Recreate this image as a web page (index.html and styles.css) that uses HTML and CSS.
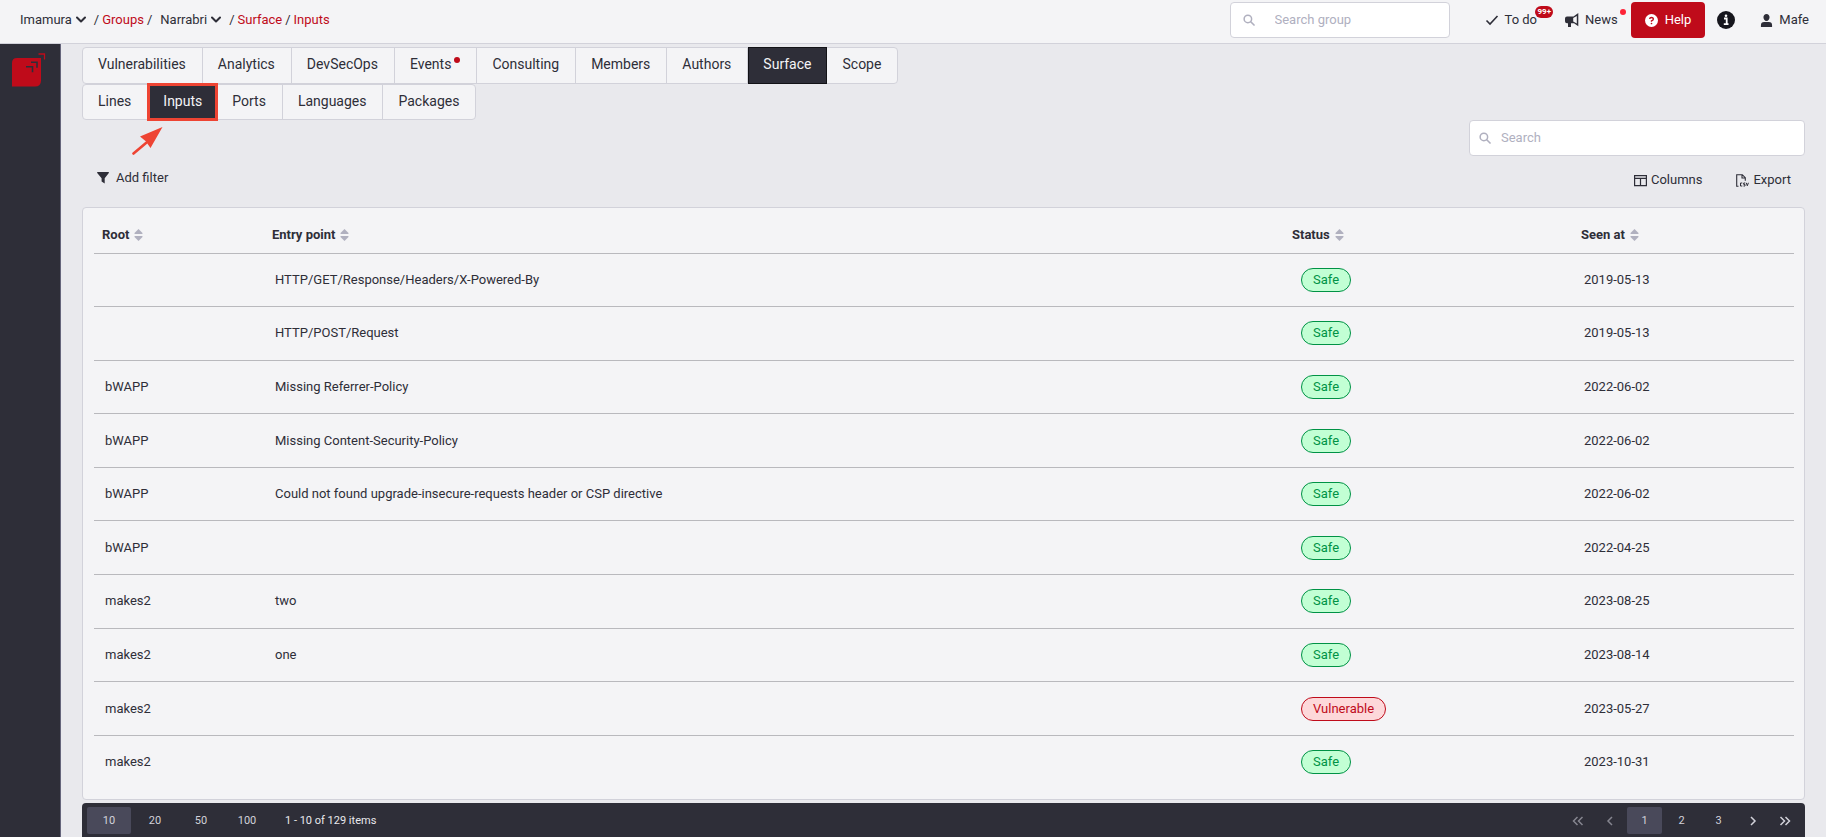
FILE: index.html
```
<!DOCTYPE html>
<html lang="en">
<head>
<meta charset="utf-8">
<title>Inputs</title>
<link rel="stylesheet" href="styles.css">
</head>
<body>
<svg class="defs" aria-hidden="true">
  <symbol id="i-chevron" viewBox="0 0 10 8"><path d="M1 1.500l4 4 4-4" fill="none" stroke="currentColor" stroke-width="2" stroke-linecap="round" stroke-linejoin="round"/></symbol>
  <symbol id="i-search" viewBox="0 0 16 16"><circle cx="6.500" cy="6.500" r="5" fill="none" stroke="currentColor" stroke-width="2"/><path d="M10.300 10.300l4.400 4.400" stroke="currentColor" stroke-width="2.200" stroke-linecap="round"/></symbol>
  <symbol id="i-sort" viewBox="0 0 9 12"><path d="M4.500 0l4 4q.3 1-.5 1H1Q.2 5 .5 4zM4.500 12l4-4q.3-1-.5-1H1q-.8 0-.5 1z" fill="currentColor"/></symbol>
</svg>
<header class="topbar">
  <nav class="crumbs" aria-label="Breadcrumb">
    <button class="crumb-menu">Imamura <svg class="chev"><use href="#i-chevron"/></svg></button>
    <span>/</span><a href="#">Groups</a><span>/</span>
    <button class="crumb-menu second">Narrabri <svg class="chev"><use href="#i-chevron"/></svg></button>
    <span>/</span><a href="#">Surface</a><span>/</span><a href="#">Inputs</a>
  </nav>
  <div class="top-actions">
    <label class="field group-search"><svg class="i12"><use href="#i-search"/></svg><input type="text" placeholder="Search group" aria-label="Search group"></label>
    <button class="act todo"><svg class="i14" viewBox="0 0 14 14"><path d="M1.500 7.500l3.500 3.500 7.500-8" fill="none" stroke="currentColor" stroke-width="1.600"/></svg>To do<span class="badge">99+</span></button>
    <button class="act news"><svg class="i14" viewBox="0 0 14 14"><path fill="currentColor" fill-rule="evenodd" d="M13.300 0v13.200L9 10.200H6v3.800H3v-3.800H2Q0 10.200 0 8.200V5.500q0-2 2-2h6.500zM11.800 3L8.200 5v3.500l3.600 2z"/></svg>News<span class="dot"></span></button>
    <button class="act help"><svg class="i13" viewBox="0 0 14 14"><circle cx="7" cy="7" r="7" fill="#fff"/><path d="M5 5.400Q5.200 3.700 7 3.700t2 1.600Q9 6.500 7 7.300v1" fill="none" stroke="#bf0b1a" stroke-width="1.500"/><circle cx="7" cy="10.200" r=".9" fill="#bf0b1a"/></svg>Help</button>
    <button class="act info" aria-label="Information"><svg class="i18" viewBox="0 0 18 18"><circle cx="9" cy="9" r="9" fill="#16161d"/><path d="M7 7.500h2.700V13M6.800 13.200h4.700" fill="none" stroke="#fff" stroke-width="1.800"/><circle cx="9" cy="4.800" r="1.300" fill="#fff"/></svg></button>
    <button class="act user"><svg class="i13" viewBox="0 0 14 14"><path fill="currentColor" d="M7 0c2 0 3.300 1.500 3.300 3.500S9 7.500 7 7.500 3.700 5.500 3.700 3.500 5 0 7 0zM4.500 8.500h5Q13 8.500 13 12v2H1v-2q0-3.500 3.500-3.500z"/></svg>Mafe</button>
  </div>
</header>
<div class="shell">
  <aside class="side">
    <a href="#" class="logo" aria-label="Home"><svg viewBox="0 0 34 34"><path d="M0 33.500V10q0-5 5-5h24v22.500q0 6-6 6z" fill="#bf0b1a"/><path d="M26.500 1h6v5.500" fill="none" stroke="#bf0b1a" stroke-width="1.300"/><path d="M19 9.200h6v5.500M14 13.700h6.500v5.500" fill="none" stroke="#2e2e38" stroke-width="1.600"/></svg></a>
  </aside>
  <main class="main">
    <nav class="tabs" aria-label="Group">
      <a href="#">Vulnerabilities</a><a href="#">Analytics</a><a href="#">DevSecOps</a><a href="#" class="has-dot">Events<span class="tab-dot"></span></a><a href="#">Consulting</a><a href="#">Members</a><a href="#">Authors</a><a href="#" class="on">Surface</a><a href="#">Scope</a>
    </nav>
    <nav class="tabs sub" aria-label="Surface">
      <a href="#">Lines</a><a href="#" class="on marked">Inputs<svg class="arrow" viewBox="0 0 32 28"><path d="M1.500 26.500L14 16" stroke="#ee4433" stroke-width="2.600" stroke-linecap="round"/><path d="M30.500 0L8 9.500l5.500 4.500 5 7z" fill="#ee4433"/></svg></a><a href="#">Ports</a><a href="#">Languages</a><a href="#">Packages</a>
    </nav>
    <div class="search-row"><label class="field table-search"><svg class="i12"><use href="#i-search"/></svg><input type="text" placeholder="Search" aria-label="Search"></label></div>
    <div class="tools">
      <button class="tool"><svg class="i12" viewBox="0 0 12 12"><path d="M.6 0h10.800q.9.200.4 1L7.700 6.200V11.500L4.600 9.500V6.200L.2 1Q-.2.200.6 0z" fill="currentColor"/></svg>Add filter</button>
      <div class="tools-right">
        <button class="tool"><svg class="i13" viewBox="0 0 13 13"><path d="M.6 1.600h11.800v10H.6zM.6 4.300h11.800M6.500 4.300v7.300" fill="none" stroke="currentColor" stroke-width="1.200"/></svg>Columns</button>
        <button class="tool export"><svg class="i13" viewBox="0 0 13 13"><path d="M2.500 12.300H.7V.7h5.600l3 3v3M6 .7v3.300h3.300" fill="none" stroke="currentColor" stroke-width="1.100"/><path d="M6.300 9H4.500v3h1.800M9.200 9H7.700v1.400H9V12H7.500M10.300 8.800l1 3 1.100-3" fill="none" stroke="currentColor"/></svg>Export</button>
      </div>
    </div>
    <div class="card">
      <table>
        <colgroup><col class="c1"><col class="c2"><col class="c3"><col class="c4"></colgroup>
        <thead><tr>
          <th>Root<svg class="sort"><use href="#i-sort"/></svg></th><th>Entry point<svg class="sort"><use href="#i-sort"/></svg></th><th>Status<svg class="sort"><use href="#i-sort"/></svg></th><th>Seen at<svg class="sort"><use href="#i-sort"/></svg></th>
        </tr></thead>
        <tbody>
          <tr><td></td><td>HTTP/GET/Response/Headers/X-Powered-By</td><td><span class="tag">Safe</span></td><td>2019-05-13</td></tr>
          <tr><td></td><td>HTTP/POST/Request</td><td><span class="tag">Safe</span></td><td>2019-05-13</td></tr>
          <tr><td>bWAPP</td><td>Missing Referrer-Policy</td><td><span class="tag">Safe</span></td><td>2022-06-02</td></tr>
          <tr><td>bWAPP</td><td>Missing Content-Security-Policy</td><td><span class="tag">Safe</span></td><td>2022-06-02</td></tr>
          <tr><td>bWAPP</td><td>Could not found upgrade-insecure-requests header or CSP directive</td><td><span class="tag">Safe</span></td><td>2022-06-02</td></tr>
          <tr><td>bWAPP</td><td></td><td><span class="tag">Safe</span></td><td>2022-04-25</td></tr>
          <tr><td>makes2</td><td>two</td><td><span class="tag">Safe</span></td><td>2023-08-25</td></tr>
          <tr><td>makes2</td><td>one</td><td><span class="tag">Safe</span></td><td>2023-08-14</td></tr>
          <tr><td>makes2</td><td></td><td><span class="tag bad">Vulnerable</span></td><td>2023-05-27</td></tr>
          <tr><td>makes2</td><td></td><td><span class="tag">Safe</span></td><td>2023-10-31</td></tr>
        </tbody>
      </table>
    </div>
    <footer class="pager">
      <div class="sizes"><button class="cur">10</button><button>20</button><button>50</button><button>100</button><span>1 - 10 of 129 items</span></div>
      <div class="pages">
        <button class="step" disabled aria-label="First page"><svg class="pi" viewBox="0 0 12 10"><path d="M5.500 1l-4 4 4 4M10.500 1l-4 4 4 4"/></svg></button>
        <button class="step" disabled aria-label="Previous page"><svg class="pi" viewBox="0 0 12 10"><path d="M8 1L4 5l4 4"/></svg></button>
        <button class="cur">1</button><button>2</button><button>3</button>
        <button class="step" aria-label="Next page"><svg class="pi" viewBox="0 0 12 10"><path d="M4 1l4 4-4 4"/></svg></button>
        <button class="step" aria-label="Last page"><svg class="pi" viewBox="0 0 12 10"><path d="M1.500 1l4 4-4 4M6.500 1l4 4-4 4"/></svg></button>
      </div>
    </footer>
  </main>
</div>
</body>
</html>
```
FILE: styles.css
```
* { box-sizing: border-box; }
body { margin: 0; min-height: 100vh; display: flex; flex-direction: column; font: 13px/20px Roboto, sans-serif; color: #2e2e38; background: #e9e9ed; }
a { color: inherit; text-decoration: none; }
button { font: inherit; color: inherit; background: none; border: 0; padding: 0; margin: 0; display: inline-flex; align-items: center; }
svg { flex: none; }
.defs { position: absolute; width: 0; height: 0; }
.topbar { display: flex; justify-content: space-between; align-items: flex-start; height: 44px; background: #f4f4f6; border-bottom: 1px solid #d2d2da; }
.crumbs { display: flex; align-items: center; gap: 3px; padding: 10px 20px; }
.crumbs a { color: #bf0b1a; }
.crumb-menu { gap: 4px; margin-right: 5px; }
.crumb-menu.second { margin-left: 5px; }
.chev { width: 10px; height: 8px; }
.i12 { width: 12px; height: 12px; }
.i13 { width: 13px; height: 13px; }
.i14 { width: 14px; height: 14px; }
.i18 { width: 18px; height: 18px; }
.field { display: flex; align-items: center; background: #fff; border: 1px solid #d2d2da; border-radius: 4px; color: #b0b0bf; height: 36px; }
.field input { font: inherit; border: 0; outline: 0; background: none; padding: 0; flex: 1; min-width: 0; color: #2e2e38; }
.field input::placeholder { color: #b0b0bf; opacity: 1; }
.top-actions { display: flex; align-items: center; padding-top: 2px; }
.group-search { width: 220px; padding: 0 12px; gap: 20px; margin-right: 35px; }
.act { position: relative; height: 36px; gap: 6px; }
.news { margin-left: 28px; }
.badge { position: absolute; top: 4px; right: -16px; background: #bf0b1a; color: #fff; font-size: 8px; font-weight: 700; line-height: 12px; padding: 0 2px; border-radius: 6px; }
.dot { position: absolute; top: 7px; right: -8px; width: 6px; height: 6px; border-radius: 50%; background: #fd2337; }
.help { margin-left: 13px; padding: 0 14px; gap: 7px; background: #bf0b1a; color: #fff; border-radius: 4px; }
.info { margin-left: 12px; }
.user { gap: 6px; margin: 0 17px 0 25px; }
.shell { flex: 1; display: flex; }
.side { flex: none; width: 61px; background: #2e2e38; border-right: 1px solid #65657b; padding: 9px 12px; }
.logo svg { display: block; width: 34px; height: 34px; }
.main { flex: 1; min-width: 0; padding: 3px 21px 0; }
.tabs { display: flex; width: max-content; height: 37px; font-size: 14px; background: #f4f4f6; border: 1px solid #d2d2da; border-radius: 4px; }
.tabs a { position: relative; display: flex; align-items: center; padding: 0 16px 3px 15px; border-right: 1px solid #d2d2da; }
.tabs a:last-child { border-right: 0; }
.tabs .on { background: #2e2e38; color: #f4f4f6; margin: -1px 0; padding: 0 15px 3px 14px; border: 1px solid #121216; }
.has-dot { gap: 3px; }
.tab-dot { width: 6px; height: 6px; border-radius: 50%; background: #bf0b1a; margin-bottom: 9px; }
.tabs.sub { height: 36px; }
.tabs .marked { margin: -2px -1px; border: 3px solid #ee4433; padding: 0 13px 3px; }
.arrow { position: absolute; width: 32px; height: 28px; left: -18px; top: 41px; }
.search-row { display: flex; justify-content: flex-end; }
.table-search { width: 336px; padding: 0 9px; gap: 10px; }
.tools { display: flex; justify-content: space-between; padding: 12px 14px 0 15px; height: 51px; align-items: flex-start; }
.tool { gap: 7px; }
.tools-right { display: flex; gap: 34px; padding-top: 2px; }
.tools-right .tool { gap: 4px; }
.card { background: #f4f4f6; border: 1px solid #d2d2da; border-radius: 4px; padding: 10px 10px 10px 11px; }
table { width: 100%; height: 571px; border-collapse: collapse; table-layout: fixed; }
.c1 { width: 10%; } .c3 { width: 17%; } .c4 { width: 13%; }
th { text-align: left; padding: 0 8px; height: 35px; font-weight: 700; border-bottom: 1px solid #b9b9bd; }
td { padding: 0 11px; height: 53px; }
tbody tr + tr td { border-top: 1px solid #b9b9bd; }
.sort { width: 9px; height: 12px; margin-left: 5px; color: #b0b0bf; vertical-align: -2px; }
.tag { display: inline-block; margin-left: 6px; padding: 1px 11px; border: 1px solid #009245; border-radius: 12px; background: #c2ffd4; color: #009245; }
.tag.bad { background: #fdd8da; border-color: #bf0b1a; color: #bf0b1a; }
.pager { display: flex; justify-content: space-between; align-items: center; margin-top: 3px; height: 35px; padding: 0 5px; background: #2e2e38; color: #d2d2da; border-radius: 4px 4px 0 0; font-size: 11px; }
.sizes, .pages { display: flex; align-items: center; gap: 2px; }
.pager button { height: 27px; min-width: 44px; justify-content: center; border-radius: 2px; }
.pages button { min-width: 35px; }
.pages .step { min-width: 30px; }
.pager .cur { background: #49495a; }
.sizes span { margin-left: 14px; color: #e9e9ed; }
.pi { width: 12px; height: 10px; fill: none; stroke: currentColor; stroke-width: 1.500; }
.pager button:disabled { color: #85858f; }
```
